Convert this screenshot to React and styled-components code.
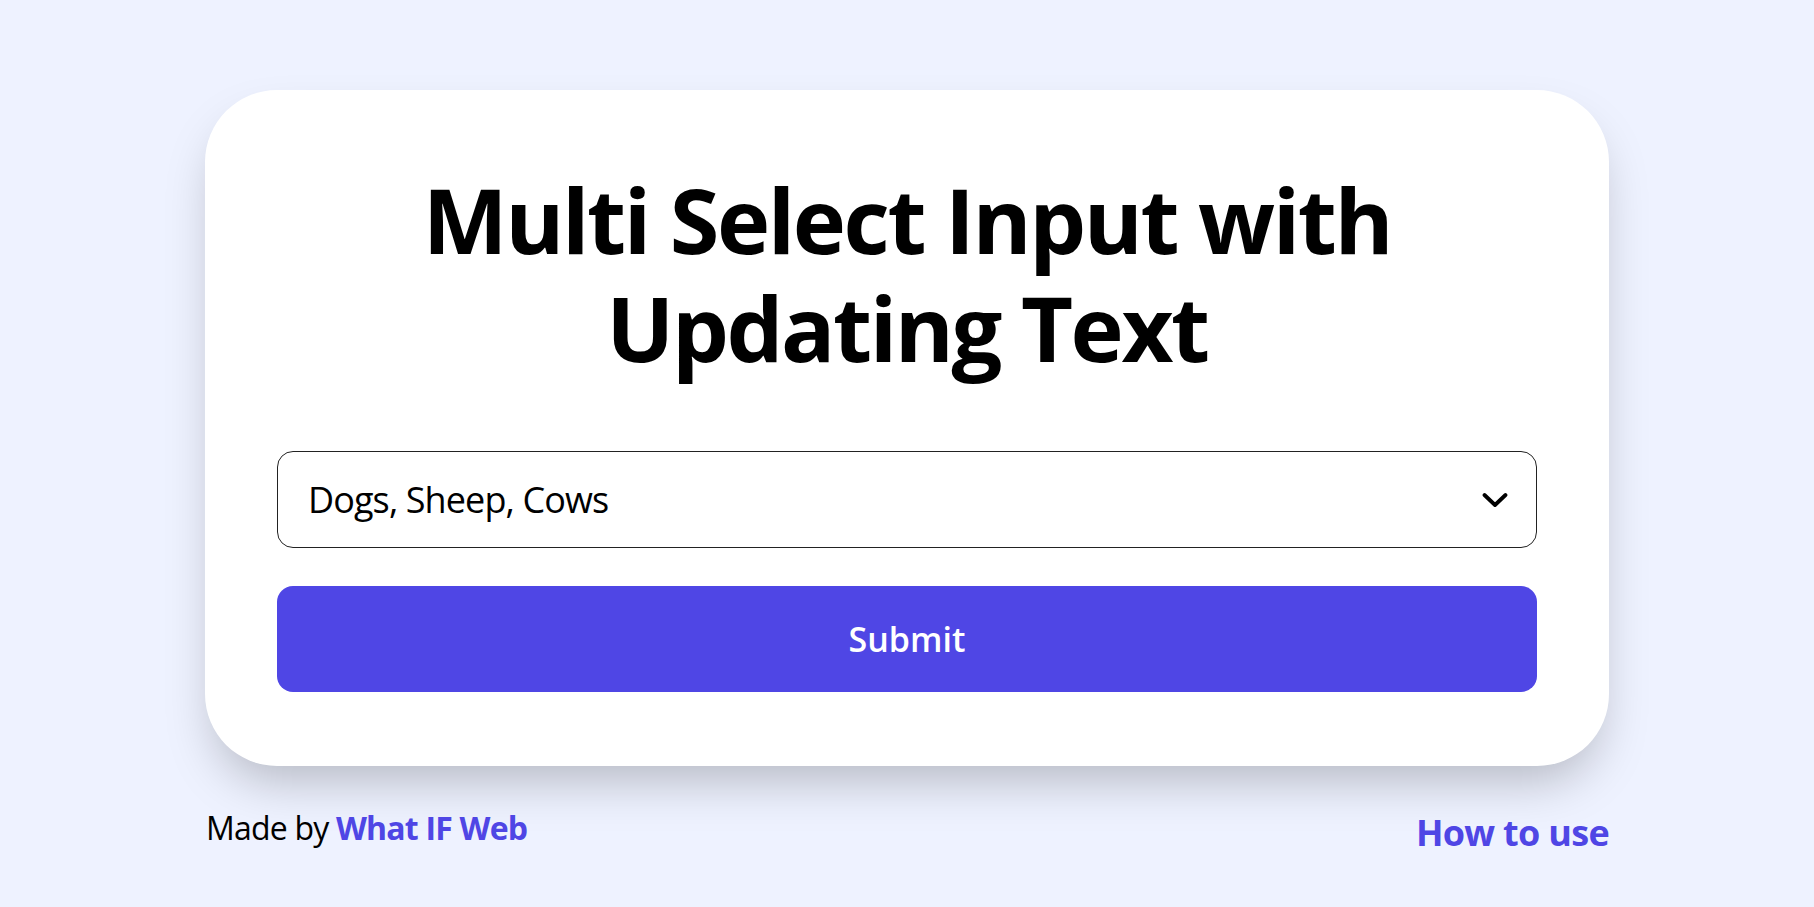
import React, { useState } from 'react';
import styled, { createGlobalStyle } from 'styled-components';

const GlobalStyle = createGlobalStyle`
  * {
    box-sizing: border-box;
  }
  body {
    margin: 0;
    background: #eef2ff;
    font-family: 'Open Sans', 'Noto Sans', sans-serif;
    color: #000;
  }
`;

const options = ['Dogs', 'Sheep', 'Cows'];

const App = () => {
  const [selected] = useState(options);

  return (
    <>
      <GlobalStyle />
      <PageStyled>
        <div className='wrap'>
          <div className='card'>
            <h1 className='title'>
              Multi Select Input with
              <br />
              Updating Text
            </h1>
            <button type='button' className='select'>
              <span className='select-txt'>{selected.join(', ')}</span>
              <svg
                className='chevron'
                width='26'
                height='16'
                viewBox='0 0 26 16'
                fill='none'
              >
                <polyline
                  points='2.5,3 13,13 23.5,3'
                  stroke='#000'
                  strokeWidth='3.8'
                  strokeLinecap='round'
                  strokeLinejoin='round'
                />
              </svg>
            </button>
            <button type='button' className='submit'>
              Submit
            </button>
          </div>
          <div className='footer'>
            <p className='made-by'>
              Made by <a href='#'>What IF Web</a>
            </p>
            <a className='how-to' href='#'>
              How to use
            </a>
          </div>
        </div>
      </PageStyled>
    </>
  );
};

export default App;

const PageStyled = styled.div`
  min-height: 100vh;
  padding-top: 90px;
  .wrap {
    width: 1404px;
    margin: 0 auto;
  }
  .card {
    display: flex;
    flex-direction: column;
    padding: 75px 72px 74px;
    background: #ffffff;
    border-radius: 72px;
    box-shadow: 0 25px 50px -12px rgba(0, 0, 0, 0.25);
  }
  .title {
    margin: 0 0 70px;
    font-weight: 700;
    font-size: 90px;
    line-height: 108px;
    letter-spacing: -2.4px;
    text-align: center;
  }
  .select {
    display: flex;
    align-items: center;
    justify-content: space-between;
    height: 97px;
    padding: 0 28px 0 30px;
    background: #ffffff;
    border: 1px solid #222;
    border-radius: 16px;
    font-family: inherit;
    font-size: 36px;
    color: #000;
    cursor: pointer;
    .select-txt {
      letter-spacing: -0.9px;
    }
    .chevron {
      display: block;
    }
  }
  .submit {
    margin-top: 38px;
    height: 106px;
    background: #4f46e5;
    border: none;
    border-radius: 16px;
    font-family: inherit;
    font-weight: 600;
    font-size: 34px;
    color: #ffffff;
    cursor: pointer;
  }
  .footer {
    display: flex;
    align-items: flex-start;
    justify-content: space-between;
    margin-top: 43px;
    padding-left: 1px;
    a {
      color: #4f46e5;
      font-weight: 700;
      text-decoration: none;
    }
  }
  .made-by {
    margin: 0;
    font-size: 32px;
    line-height: 1.2;
    letter-spacing: -0.8px;
  }
  .how-to {
    margin-top: 2px;
    font-size: 36px;
    line-height: 1.2;
    letter-spacing: -0.7px;
  }
`;
